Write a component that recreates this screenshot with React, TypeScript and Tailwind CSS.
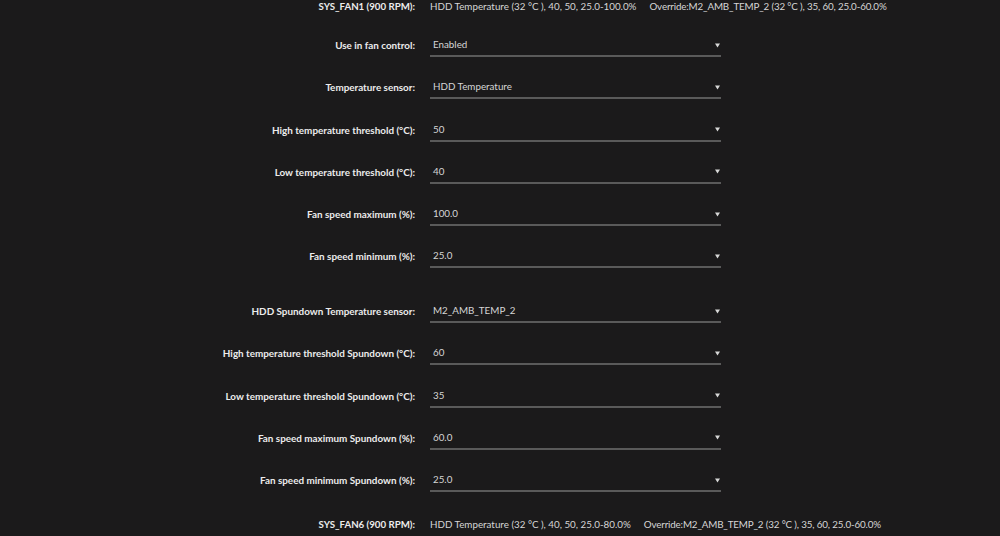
const fanRows = [
  { label: "Use in fan control:", value: "Enabled" },
  { label: "Temperature sensor:", value: "HDD Temperature" },
  { label: "High temperature threshold (°C):", value: "50" },
  { label: "Low temperature threshold (°C):", value: "40" },
  { label: "Fan speed maximum (%):", value: "100.0" },
  { label: "Fan speed minimum (%):", value: "25.0" },
];

const spundownRows = [
  { label: "HDD Spundown Temperature sensor:", value: "M2_AMB_TEMP_2" },
  { label: "High temperature threshold Spundown (°C):", value: "60" },
  { label: "Low temperature threshold Spundown (°C):", value: "35" },
  { label: "Fan speed maximum Spundown (%):", value: "60.0" },
  { label: "Fan speed minimum Spundown (%):", value: "25.0" },
];

const Caret = () => (
  <svg width="5" height="5" viewBox="0 0 5 5" className="shrink-0">
    <path d="M0 0.5 H5 L2.5 4.5 Z" fill="#d8d8d8" />
  </svg>
);

const SelectRow = ({ label, value }: { label: string; value: string }) => (
  <div className="flex h-[42.25px] items-center">
    <div className="w-[415px] text-right text-[9.9px] font-bold text-[#ececec]">{label}</div>
    <div className="ml-[15px] flex h-[22px] w-[291px] items-center justify-between border-b-2 border-[#5a5a5a] pl-[3px] pr-[1px] text-[#d6d6d6]">
      <span>{value}</span>
      <Caret />
    </div>
  </div>
);

const FanSummary = ({ name, summary, override }: { name: string; summary: string; override: string }) => (
  <div className="flex h-[12px] items-center">
    <div className="w-[415px] text-right text-[9.7px] font-bold text-[#ececec]">{name}</div>
    <div className="ml-[15px] whitespace-nowrap text-[#d6d6d6]">
      {summary}
      <span className="ml-[13px] tracking-[-0.15px]">{override}</span>
    </div>
  </div>
);

export default function App() {
  return (
    <div className="h-[536px] w-[1000px] overflow-hidden bg-[#1b1a1b] pt-[1px] text-[9.8px] leading-none [font-family:Lato,sans-serif]">
      <FanSummary
        name="SYS_FAN1 (900 RPM):"
        summary="HDD Temperature (32 °C ), 40, 50, 25.0-100.0%"
        override="Override:M2_AMB_TEMP_2 (32 °C ), 35, 60, 25.0-60.0%"
      />
      <div className="mt-[12px]">
        {fanRows.map((r) => (
          <SelectRow key={r.label} {...r} />
        ))}
      </div>
      <div className="mt-[12.5px]">
        {spundownRows.map((r) => (
          <SelectRow key={r.label} {...r} />
        ))}
      </div>
      <div className="mt-[17px]">
        <FanSummary
          name="SYS_FAN6 (900 RPM):"
          summary="HDD Temperature (32 °C ), 40, 50, 25.0-80.0%"
          override="Override:M2_AMB_TEMP_2 (32 °C ), 35, 60, 25.0-60.0%"
        />
      </div>
    </div>
  );
}
